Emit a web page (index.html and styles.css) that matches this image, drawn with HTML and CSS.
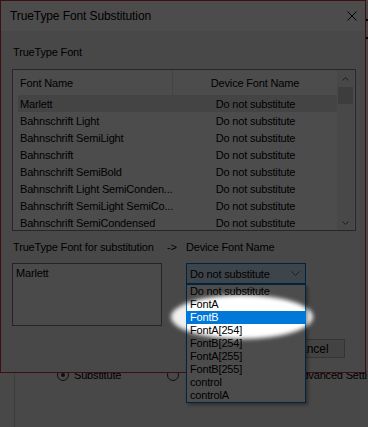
FILE: index.html
```html
<!DOCTYPE html>
<html lang="en">
<head>
    <meta charset="UTF-8">
    <title>TrueType Font Substitution</title>
    <link rel="stylesheet" href="styles.css">
</head>
<body>

    <!-- printer properties window behind the dialog -->
    <div class="backdrop">
        <div class="group">
            <div class="radios">
                <span class="radio checked"></span><span class="radio-text">Substitute</span>
                <span class="radio second"></span>
                <span class="adv">Advanced Setti</span>
            </div>
        </div>
        <div class="marks"><span></span><span></span></div>
    </div>

    <div class="dialog">
        <div class="titlebar">
            <span class="title">TrueType Font Substitution</span>
            <svg class="close" width="10" height="10" viewBox="0 0 10 10">
                <path d="M0.5 0.5 L9.5 9.5 M9.5 0.5 L0.5 9.5" stroke="#000" stroke-width="1" fill="none"/>
            </svg>
        </div>

        <div class="dialog-body">
            <div class="label">TrueType Font</div>

            <div class="listview">
                <div class="pane">
                    <div class="lv-header">
                        <div class="hcell first">Font Name</div>
                        <div class="hcell second">Device Font Name</div>
                    </div>
                    <div class="lv-row selected"><span class="c1">Marlett</span><span class="c2">Do not substitute</span></div>
                    <div class="lv-row"><span class="c1">Bahnschrift Light</span><span class="c2">Do not substitute</span></div>
                    <div class="lv-row"><span class="c1">Bahnschrift SemiLight</span><span class="c2">Do not substitute</span></div>
                    <div class="lv-row"><span class="c1">Bahnschrift</span><span class="c2">Do not substitute</span></div>
                    <div class="lv-row"><span class="c1">Bahnschrift SemiBold</span><span class="c2">Do not substitute</span></div>
                    <div class="lv-row"><span class="c1">Bahnschrift Light SemiConden...</span><span class="c2">Do not substitute</span></div>
                    <div class="lv-row"><span class="c1">Bahnschrift SemiLight SemiCo...</span><span class="c2">Do not substitute</span></div>
                    <div class="lv-row"><span class="c1">Bahnschrift SemiCondensed</span><span class="c2">Do not substitute</span></div>
                </div>
                <div class="scrollbar">
                    <div class="sb-btn">
                        <svg width="7" height="4" viewBox="0 0 7 4"><path d="M0.5 3.5 L3.5 0.5 L6.5 3.5" stroke="#606060" fill="none"/></svg>
                    </div>
                    <div class="sb-thumb"></div>
                    <div class="sb-track"></div>
                    <div class="sb-btn">
                        <svg width="7" height="4" viewBox="0 0 7 4"><path d="M0.5 0.5 L3.5 3.5 L6.5 0.5" stroke="#606060" fill="none"/></svg>
                    </div>
                </div>
            </div>

            <div class="sub-labels">
                <span>TrueType Font for substitution</span>
                <span class="arrow">-&gt;</span>
                <span>Device Font Name</span>
            </div>

            <div class="sub-fields">
                <div class="textbox">Marlett</div>
                <div></div>
                <div class="combo">
                    <span>Do not substitute</span>
                    <svg width="9" height="5" viewBox="0 0 9 5"><path d="M0.5 0.5 L4.5 4.5 L8.5 0.5" stroke="#606060" fill="none"/></svg>
                </div>
            </div>

            <div class="buttons">
                <button class="btn">OK</button>
                <button class="btn">Cancel</button>
            </div>
        </div>
    </div>

    <!-- open drop-down of the combo box -->
    <ul class="combo-list">
        <li>Do not substitute</li>
        <li>FontA</li>
        <li class="active">FontB</li>
        <li>FontA[254]</li>
        <li>FontB[254]</li>
        <li>FontA[255]</li>
        <li>FontB[255]</li>
        <li>control</li>
        <li>controlA</li>
    </ul>

    <!-- dim everything except the highlighted entries -->
    <div class="spot"></div>

</body>
</html>
```

FILE: styles.css
```css
body {
    margin: 0;
    width: 368px;
    height: 427px;
    overflow: hidden;
    position: relative;
    font-family: "Liberation Sans", Arial, sans-serif;
    font-size: 11px;
    letter-spacing: -0.17px;
    color: #000;
    background: #f0f0f0;
}

/* window behind */
.backdrop {
    height: 427px;
    box-sizing: border-box;
    padding: 368px 0 0 14px;
}
.group {
    border-left: 1px solid #c8c8c8;
    height: 100%;
    overflow: hidden;
}
.radios {
    display: flex;
    align-items: center;
    height: 14px;
    padding-left: 42px;
    white-space: nowrap;
}
.radio {
    width: 10px;
    height: 10px;
    border: 1px solid #333;
    border-radius: 50%;
    position: relative;
    flex: none;
}
.radio.checked::after {
    content: "";
    position: absolute;
    left: 3px;
    top: 3px;
    width: 4px;
    height: 4px;
    border-radius: 50%;
    background: #333;
}
.radio-text {
    margin-left: 5px;
}
.radio.second {
    margin-left: 46px;
}
.adv {
    margin-left: 116px;
}
.marks {
    position: absolute;
    right: 0;
    top: 19px;
    width: 2px;
    display: flex;
    flex-direction: column;
    gap: 16px;
}
.marks span {
    height: 2px;
    background: #000;
}

/* dialog */
.dialog {
    position: absolute;
    left: 0;
    top: 0;
    width: 366px;
    height: 373px;
    box-sizing: border-box;
    border: 1px solid #d03040;
    background: #f0f0f0;
}
.titlebar {
    height: 30px;
    background: #fff;
    display: flex;
    align-items: center;
    justify-content: space-between;
    padding: 0 8px 0 9px;
}
.title {
    font-size: 12px;
    letter-spacing: -0.1px;
}
.dialog-body {
    padding: 15px 9px 0 11px;
}
.label {
    line-height: 13px;
    padding-left: 1px;
}

.listview {
    margin-top: 10px;
    width: 344px;
    height: 162px;
    box-sizing: border-box;
    border: 1px solid #828282;
    background: #fff;
    display: grid;
    grid-template-columns: 324px 17px;
    overflow: hidden;
}
.lv-header {
    display: flex;
    height: 25px;
    align-items: center;
}
.hcell.first {
    width: 160px;
    padding-left: 7px;
    box-sizing: border-box;
    border-right: 1px solid #e5e5e5;
    height: 100%;
    display: flex;
    align-items: center;
}
.hcell.second {
    flex: 1;
    text-align: center;
}
.lv-row {
    display: flex;
    height: 17px;
    align-items: center;
    margin-left: 5px;
}
.lv-row.selected {
    background: #e5e5e5;
}
.c1 {
    width: 156px;
    padding-left: 2px;
    box-sizing: border-box;
    white-space: nowrap;
}
.c2 {
    flex: 1;
    text-align: center;
}
.scrollbar {
    background: #f0f0f0;
    display: flex;
    flex-direction: column;
}
.sb-btn {
    height: 17px;
    display: flex;
    align-items: center;
    justify-content: center;
    flex: none;
}
.sb-thumb {
    height: 17px;
    margin: 0 1px;
    background: #cdcdcd;
    flex: none;
}
.sb-track {
    flex: 1;
}

.sub-labels {
    display: grid;
    grid-template-columns: 150px 24px 120px;
    margin-top: 10px;
    line-height: 13px;
    white-space: nowrap;
}
.sub-labels span:first-child {
    padding-left: 1px;
}
.arrow {
    padding-left: 5px;
}
.sub-fields {
    display: grid;
    grid-template-columns: 150px 24px 120px;
    align-items: start;
    margin-top: 9px;
}
.textbox {
    height: 63px;
    box-sizing: border-box;
    border: 1px solid #7a7a7a;
    background: #f7f7f7;
    padding: 3px 3px;
}
.combo {
    height: 21px;
    box-sizing: border-box;
    border: 1px solid #0078d7;
    background: #cce4f7;
    display: flex;
    align-items: center;
    justify-content: space-between;
    padding: 0 5px 0 3px;
}

.buttons {
    display: flex;
    justify-content: flex-end;
    gap: 8px;
    margin-top: 13px;
    padding-right: 11px;
}
.btn {
    width: 70px;
    height: 19px;
    padding: 0;
    border: 1px solid #adadad;
    background: #e1e1e1;
    font: inherit;
    font-size: 12px;
    color: #000;
}

/* drop-down list */
.combo-list {
    position: absolute;
    left: 186px;
    top: 284px;
    width: 120px;
    margin: 0;
    padding: 0;
    list-style: none;
    box-sizing: border-box;
    border: 1px solid #0078d7;
    background: #fff;
    box-shadow: 2px 2px 3px rgba(0, 0, 0, 0.35);
    font-size: 11px;
}
.combo-list li {
    height: 13px;
    line-height: 13px;
    padding-left: 3px;
}
.combo-list li.active {
    background: #0078d7;
    color: #fff;
}

/* spotlight */
.spot {
    position: absolute;
    left: 171px;
    top: 295px;
    width: 142px;
    height: 44px;
    border-radius: 50%;
    box-shadow: 0 0 0 600px rgba(0, 0, 0, 0.7);
    filter: blur(2px);
}
```
